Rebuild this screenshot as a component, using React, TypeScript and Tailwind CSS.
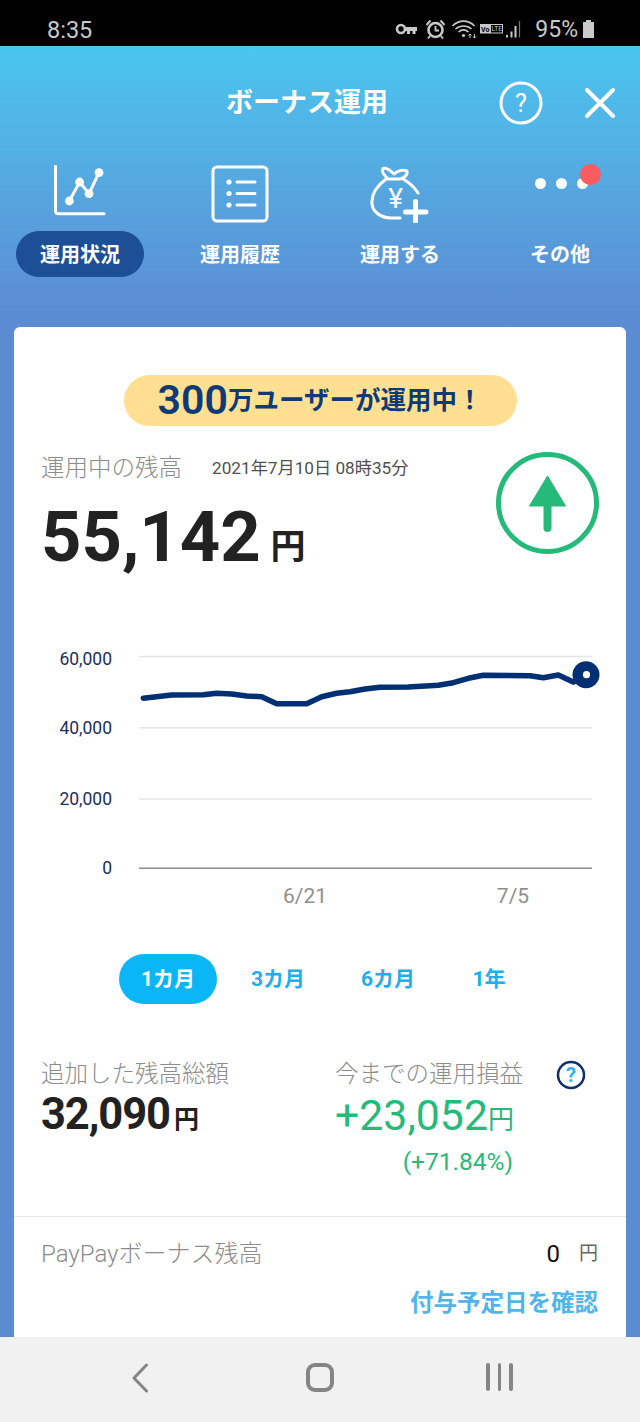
const font = "font-['Roboto','Noto_Sans_CJK_JP',sans-serif]";

function StatusIcons() {
  return (
    <svg width="130" height="24" viewBox="395 18 130 24" fill="none" stroke="#c9c9c9" className="block">
      <circle cx="402" cy="29" r="4" strokeWidth="2.6" />
      <path d="M405 27H418V31H416.500V34H413.500V31H411V34H408V31H405Z" fill="#c9c9c9" stroke="none" />
      <circle cx="436.5" cy="30" r="7" strokeWidth="2.6" />
      <path d="M436.5 26V30.5H440" strokeWidth="1.8" />
      <path d="M427.5 25L431.5 20.5M445.5 25L441.5 20.5M431 36L429 38.5M442 36L444 38.5" strokeWidth="2" />
      <path d="M453.5 26C460 19.5 469 19.5 475.5 26" strokeWidth="1.6" />
      <path d="M456.5 29C461 25 468 25 472.5 29" strokeWidth="1.6" />
      <path d="M459.5 32C462.5 29.5 466.5 29.5 469.5 32" strokeWidth="1.6" />
      <circle cx="464.5" cy="35.5" r="1.6" fill="#c9c9c9" stroke="none" />
      <path d="M471 34V38M469.5 35.5L471 34L472.5 35.5M475.5 38V34M474 36.5L475.5 38L477 36.5" strokeWidth="1" />
      <rect x="481" y="24" width="23" height="9.5" fill="#c9c9c9" stroke="none" />
      <rect x="492" y="25" width="11" height="7.5" fill="#000" stroke="none" />
      <text x="482" y="31.5" fontSize="7" fontWeight="700" fill="#000" stroke="none" fontFamily="Roboto">Vo</text>
      <text x="492.6" y="31.3" fontSize="6.6" fill="#c9c9c9" stroke="none" fontFamily="Roboto">LTE</text>
      <path d="M508 35V37.5M512.5 31.5V37.5M516.5 26V37.5" strokeWidth="2" />
      <path d="M520.5 21V37.5" strokeWidth="1.2" stroke="#777" />
    </svg>
  );
}

function ChartIcon() {
  return (
    <svg width="52" height="52" viewBox="54 164 52 52" fill="none" stroke="#fff" strokeWidth="3" className="block">
      <path d="M55.5 165V210Q55.5 212.7 58.5 212.7H104" strokeLinecap="round" />
      <path d="M69.4 200L79.6 181L89 192.7L99 171.7" />
      <g fill="#fff" stroke="none">
        <circle cx="69.4" cy="200" r="4.4" />
        <circle cx="79.6" cy="181" r="4.4" />
        <circle cx="89" cy="192.7" r="4.4" />
        <circle cx="99" cy="171.7" r="4.4" />
      </g>
    </svg>
  );
}

function ListIcon() {
  return (
    <svg width="58" height="58" viewBox="211 165 58 58" fill="none" stroke="#fff" strokeWidth="3" className="block">
      <rect x="213" y="167" width="54" height="54" rx="4" />
      <g fill="#fff" stroke="none">
        <circle cx="229" cy="182" r="2.6" />
        <circle cx="229" cy="193.5" r="2.6" />
        <circle cx="229" cy="205" r="2.6" />
      </g>
      <path d="M237 182H255M237 193.5H255M237 205H255" strokeLinecap="round" />
    </svg>
  );
}

function BagIcon() {
  return (
    <svg width="60" height="58" viewBox="370 165 60 58" fill="none" stroke="#fff" strokeWidth="3" className="block">
      <path d="M386 179C378 185 371 194 372 204C373 213 382 218 392 218H400" strokeLinecap="round" />
      <path d="M403 179C410 183 415 188 418 193" strokeLinecap="round" />
      <path d="M388 179C384 175 381 171 383 168.500C387 167 391 171 394 174C397 171 403 169 407 171C408 175 404 178 400 179Z" strokeLinejoin="round" />
      <text x="395.500" y="208" textAnchor="middle" fontSize="28" fill="#fff" stroke="none" fontFamily="Roboto">¥</text>
      <path d="M415.500 201.500V221M405.500 212H426" strokeWidth="5" strokeLinecap="round" />
    </svg>
  );
}

function DotsIcon() {
  return (
    <div className="relative flex h-[57px] w-[60px] items-start gap-[10px] pl-[5px] pt-[13px]">
      <span className="h-[11px] w-[11px] rounded-full bg-white" />
      <span className="h-[11px] w-[11px] rounded-full bg-white" />
      <span className="h-[11px] w-[11px] rounded-full bg-white" />
      <span className="absolute left-[50px] top-[-1px] h-[21px] w-[21px] rounded-full bg-[#f85c60]" />
    </div>
  );
}

function Chart() {
  const pts =
    "143.3,698.3 171.7,695 203.3,694.7 216.7,693.3 231.7,694 246.7,696 261.7,696.7 276.7,703.7 306.7,703.7 321.7,696.7 336.7,693.3 350,691.7 365,689 380,687.3 408.3,687 438.3,685.3 453.3,682.7 468.3,678.3 483.3,675.3 530,675.7 543.3,677.7 558.3,675 573.3,682 586,674.7";
  const ys = [
    { y: 656.5, t: 664.5, label: "60,000" },
    { y: 727.7, t: 734, label: "40,000" },
    { y: 799, t: 805, label: "20,000" },
  ];
  return (
    <svg width="612" height="290" viewBox="14 630 612 290" className="mt-[58px] block">
      {ys.map((r) => (
        <g key={r.label}>
          <path d={`M139 ${r.y}H592`} stroke="#e6e6e6" strokeWidth="1.500" />
          <text x="112" y={r.t} textAnchor="end" fontSize="17.500" fill="#1c2f5e" fontFamily="Roboto">
            {r.label}
          </text>
        </g>
      ))}
      <path d="M139 868.300H592" stroke="#8c8c8c" strokeWidth="1.500" />
      <text x="112" y="874" textAnchor="end" fontSize="17.500" fill="#1c2f5e" fontFamily="Roboto">0</text>
      <text x="305" y="902.500" textAnchor="middle" fontSize="21" fill="#8f8f8f" fontFamily="Roboto">6/21</text>
      <text x="513" y="902.500" textAnchor="middle" fontSize="21" fill="#8f8f8f" fontFamily="Roboto">7/5</text>
      <polyline points={pts} fill="none" stroke="#012f74" strokeWidth="5.500" strokeLinecap="round" strokeLinejoin="round" />
      <circle cx="586" cy="674.700" r="13.500" fill="#012f74" />
      <circle cx="586.500" cy="674.700" r="3.600" fill="#fff" />
    </svg>
  );
}

export default function App() {
  const tab = "flex h-[50px] items-center justify-center pt-[2px] text-[21px] font-bold text-[#22aee8]";
  const navLabel = "flex h-[46px] items-center justify-center pt-[2px] text-[20px] font-bold text-white";
  const grey = "text-[23.5px] leading-[32px] font-light text-[#8c8c8c]";
  return (
    <div className={`${font} flex h-[1422px] w-[640px] flex-col overflow-hidden bg-white`}>
      <div className="flex h-[46px] shrink-0 items-center bg-black pl-[47px] pr-[46px] pt-[13px] text-[#c9c9c9]">
        <span className="text-[23.500px] leading-[30px]">8:35</span>
        <div className="ml-auto flex items-center">
          <StatusIcons />
          <span className="ml-[11px] text-[23px] leading-[30px]">95%</span>
          <div className="relative ml-[5px] h-[16px] w-[11px] bg-[#c9c9c9]">
            <span className="absolute left-[3px] top-[-2px] h-[2px] w-[5px] bg-[#c9c9c9]" />
          </div>
        </div>
      </div>

      <main className="flex min-h-0 flex-1 flex-col bg-linear-to-b from-[#48c6f0] to-[#5b8bd1] to-[21%]">
        <header className="mt-[37px] flex h-[40px] items-center pl-[226px] pr-[25px]">
          <h1 className="w-[162px] text-[27px] leading-[42px] font-bold whitespace-nowrap text-white">ボーナス運用</h1>
          <svg width="44" height="44" viewBox="0 0 44 44" fill="none" className="ml-auto block">
            <circle cx="22" cy="22" r="20" stroke="#fff" strokeWidth="3" />
            <text x="22" y="31" textAnchor="middle" fontSize="25" fill="#fff" fontFamily="Roboto">?</text>
          </svg>
          <svg width="30" height="30" viewBox="0 0 30 30" fill="none" stroke="#fff" strokeWidth="4" className="ml-[42px] block">
            <path d="M2 2L28 28M28 2L2 28" strokeLinecap="round" />
          </svg>
        </header>

        <nav className="mt-[42px] grid grid-cols-4">
          {[
            { label: "運用状況", icon: <ChartIcon />, active: true },
            { label: "運用履歴", icon: <ListIcon /> },
            { label: "運用する", icon: <BagIcon /> },
            { label: "その他", icon: <DotsIcon /> },
          ].map((it) => (
            <div key={it.label} className="flex flex-col items-center">
              <div className="flex h-[57px] items-start justify-center">{it.icon}</div>
              <div className={`${navLabel} mt-[9px] w-[128px] rounded-full ${it.active ? "bg-[#1d4f96]" : ""}`}>{it.label}</div>
            </div>
          ))}
        </nav>

        <section className="mx-[14px] mt-[50px] flex min-h-0 flex-1 flex-col overflow-hidden rounded-t-[6px] bg-white">
          <div className="mt-[48px] flex justify-center">
            <div className="flex h-[51px] w-[393px] items-center justify-center rounded-full bg-[#ffe092] text-[#0f3a75]">
              <span className="text-[41px] leading-[51px] font-semibold">300</span>
              <span className="text-[25.500px] leading-[51px] font-semibold">万ユーザーが運用中！</span>
            </div>
          </div>

          <div className="mt-[26px] flex items-start justify-between pl-[27px] pr-[27px]">
            <div>
              <div className="flex items-center">
                <span className={grey}>運用中の残高</span>
                <span className="ml-[30px] text-[17.200px] leading-[32px] text-[#4f4f4f]">2021年7月10日 08時35分</span>
              </div>
              <div className="mt-[18px] flex items-end font-bold text-[#222]">
                <span className="text-[70.500px] leading-[70px]">55,142</span>
                <span className="mb-[2px] ml-[10px] text-[35px] leading-[44px]">円</span>
              </div>
            </div>
            <svg width="103" height="102" viewBox="0 0 103 102" className="block" fill="none">
              <ellipse cx="51.500" cy="51" rx="49" ry="48.500" stroke="#25b97a" strokeWidth="5" />
              <path d="M51.500 24L69.500 54H33.500Z" fill="#25b97a" stroke="#25b97a" strokeWidth="1" strokeLinejoin="round" />
              <path d="M51.500 50V76" stroke="#25b97a" strokeWidth="8" strokeLinecap="round" />
            </svg>
          </div>

          <Chart />

          <div className="mt-[34px] flex gap-[12px] pl-[105px]">
            <div className={`${tab} w-[98px] rounded-full bg-[#0bb6f6] text-white`}>1カ月</div>
            <div className={`${tab} w-[98px]`}>3カ月</div>
            <div className={`${tab} w-[98px]`}>6カ月</div>
            <div className={`${tab} w-[80px]`}>1年</div>
          </div>

          <div className="mt-[54px] flex h-[158px] items-start pl-[27px]">
            <div className="w-[294px]">
              <div className={grey}>追加した残高総額</div>
              <div className="mt-[3px] flex items-end font-bold text-[#222]">
                <span className="text-[43.500px] leading-[44px] tracking-[-1.100px]">32,090</span>
                <span className="mb-[1px] ml-[4px] text-[25px] leading-[32px]">円</span>
              </div>
            </div>
            <div className="relative w-[178px]">
              <div className={`${grey} whitespace-nowrap`}>今までの運用損益</div>
              <div className="mt-[3px] flex items-end text-[#25b97a]">
                <span className="text-[42.800px] leading-[44px]">+23,052</span>
                <span className="mb-[1px] text-[26px] leading-[32px]">円</span>
              </div>
              <div className="mt-[9px] text-right text-[24.500px] leading-[32px] text-[#25b97a]">(+71.84%)</div>
              <svg width="30" height="30" viewBox="0 0 30 30" fill="none" className="absolute left-[221px] top-[2px] block">
                <circle cx="15" cy="15" r="13" stroke="#0f2f68" strokeWidth="2.500" />
                <text x="15" y="22" textAnchor="middle" fontSize="20" fontWeight="700" fill="#2cb2e8" fontFamily="Roboto">?</text>
              </svg>
            </div>
          </div>

          <div className="border-t border-[#e8e8e8] pl-[27px] pr-[28px] pt-[21px]">
            <div className="flex items-center justify-between">
              <span className="text-[24px] leading-[32px] font-light text-[#8c8c8c]">PayPayボーナス残高</span>
              <span className="flex items-center">
                <span className="text-[24px] leading-[32px] text-[#111]">0</span>
                <span className="ml-[19px] text-[19px] leading-[32px] text-[#666]">円</span>
              </span>
            </div>
            <div className="mt-[17px] text-right text-[23.500px] leading-[32px] font-bold text-[#52b5ea]">付与予定日を確認</div>
          </div>
        </section>
      </main>

      <footer className="grid h-[85px] shrink-0 grid-cols-3 bg-[#f1f1f1] px-[50.500px] pt-[26px]">
        <div className="flex justify-center">
          <svg width="20" height="30" viewBox="0 0 20 30" fill="none" stroke="#858585" strokeWidth="3" className="block">
            <path d="M16.500 2L4 15L16.500 28" strokeLinecap="round" strokeLinejoin="round" />
          </svg>
        </div>
        <div className="flex justify-center">
          <div className="h-[29px] w-[28px] rounded-[9px] border-[4px] border-[#858585]" />
        </div>
        <div className="flex justify-center gap-[8px]">
          <span className="h-[28px] w-[3.500px] rounded-full bg-[#858585]" />
          <span className="h-[28px] w-[3.500px] rounded-full bg-[#858585]" />
          <span className="h-[28px] w-[3.500px] rounded-full bg-[#858585]" />
        </div>
      </footer>
    </div>
  );
}
